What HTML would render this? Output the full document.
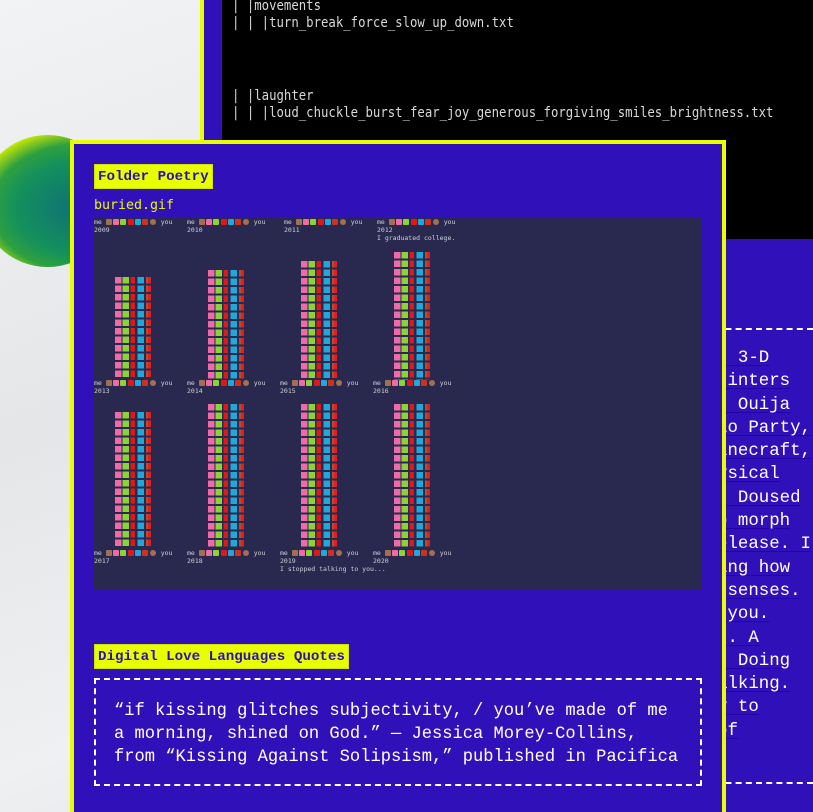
<!DOCTYPE html>
<html><head><meta charset="utf-8"><style>
*{margin:0;padding:0;box-sizing:border-box}
html,body{width:813px;height:812px;overflow:hidden}
body{position:relative;background:linear-gradient(160deg,#f2f3f4 0%,#e4e6e8 40%,#eef0f1 70%,#dcdfe2 100%);font-family:"Liberation Mono",monospace}
.abs{position:absolute}
#ball{left:-20px;top:135px;width:135px;height:132px;border-radius:50%;background:radial-gradient(ellipse at 75% 55%,#0f6f78 0%,#14905c 45%,#2ea040 62%,#d8f000 80%,#dff500 100%)}
#back{left:200px;top:0;width:613px;height:812px;background:#3010b8;border-left:4px solid #e8ff00}
#term{left:222px;top:0;width:591px;height:239px;background:#000;color:#d8d8d8;font-family:"DejaVu Sans Mono","Liberation Mono",monospace;font-size:14px;line-height:17px}
#term div{position:absolute;left:10px;white-space:pre;transform:scaleX(.88);transform-origin:left}
#rt{left:706.6px;top:347px;font-size:17.4px;line-height:23.3px;color:#fff;white-space:pre}
#rt div{text-decoration:underline;text-decoration-color:#2500a8;text-underline-offset:3px}
.dash{height:0;border-top:2px dashed #fff}
#front{left:70px;top:140px;width:656px;height:700px;background:#3010b8;border:4px solid #e8ff00}
.hd{position:absolute;background:#e8ff00;color:#2c10b0;font-weight:bold;font-size:14.2px;height:25px;line-height:25px;padding:0 3px;border:1px solid #d0e000}
#gif{left:94px;top:217px;width:607px;height:372px;background:#29294f;overflow:hidden}
.lab{position:absolute;font-family:"DejaVu Sans Mono",monospace;font-size:6.5px;color:#d0d0d8;line-height:8px;white-space:pre}
.em{display:inline-block;width:6px;height:6px;border-radius:1px;margin-right:1.3px;vertical-align:-1px}
.tw{position:absolute;width:37px;background:
 repeating-linear-gradient(180deg,transparent 0 6.5px,#29294f 6.5px 8.5px),
 linear-gradient(90deg,#f06aa8 0 6.5px,transparent 6.5px 7.5px,#8ad43a 7.5px 14px,transparent 14px 15.5px,#e01818 15.5px 20px,transparent 20px 22.5px,#1fa8d8 22.5px 29px,transparent 29px 31px,#b05030 31px 33px,#e02020 33px 36px,transparent 36px)}
#quote{left:94px;top:678px;width:608px;height:108px;border:2px dashed #fff;color:#fff;font-size:17.1px;line-height:23px;padding:20px 0 0 18px;white-space:pre}
</style></head><body>
<div id="ball" class="abs"></div>
<div id="back" class="abs"></div>
<div id="term" class="abs">
<div style="top:-2px">| |movements</div>
<div style="top:15px">| | |turn_break_force_slow_up_down.txt</div>
<div style="top:88px">| |laughter</div>
<div style="top:105px">| | |loud_chuckle_burst_fear_joy_generous_forgiving_smiles_brightness.txt</div>
<div style="top:196px">                                                             .txt</div>
</div>
<div class="abs dash" style="left:705px;top:328px;width:108px"></div>
<div class="abs dash" style="left:705px;top:782px;width:108px"></div>
<div id="rt" class="abs"><div>ed 3-D</div><div>printers</div><div>in Ouija</div><div>dio Party,</div><div>Minecraft,</div><div>hysical</div><div>s. Doused</div><div>to morph</div><div>release. I</div><div>ding how</div><div>r senses.</div><div>o you.</div><div>on. A</div><div>t. Doing</div><div>talking.</div><div>ly to</div><div> of</div></div>
<div id="front" class="abs"></div>
<div class="hd" style="left:94px;top:164px">Folder Poetry</div>
<div class="abs" style="left:94px;top:198px;color:#e8ff00;font-size:13.3px;font-family:'DejaVu Sans Mono',monospace">buried.gif</div>
<div id="gif" class="abs">
<div class="lab" style="left:0;top:1px">me <i class="em" style="background:#a07050"></i><i class="em" style="background:#f06aa8"></i><i class="em" style="background:#8ad43a"></i><i class="em" style="background:#e01818"></i><i class="em" style="background:#1fa8d8"></i><i class="em" style="background:#d03020"></i><i class="em" style="background:#a07050;border-radius:50%"></i> you<br>2009</div>
<div class="lab" style="left:93px;top:1px">me <i class="em" style="background:#a07050"></i><i class="em" style="background:#f06aa8"></i><i class="em" style="background:#8ad43a"></i><i class="em" style="background:#e01818"></i><i class="em" style="background:#1fa8d8"></i><i class="em" style="background:#d03020"></i><i class="em" style="background:#a07050;border-radius:50%"></i> you<br>2010</div>
<div class="lab" style="left:190px;top:1px">me <i class="em" style="background:#a07050"></i><i class="em" style="background:#f06aa8"></i><i class="em" style="background:#8ad43a"></i><i class="em" style="background:#e01818"></i><i class="em" style="background:#1fa8d8"></i><i class="em" style="background:#d03020"></i><i class="em" style="background:#a07050;border-radius:50%"></i> you<br>2011</div>
<div class="lab" style="left:283px;top:1px">me <i class="em" style="background:#a07050"></i><i class="em" style="background:#f06aa8"></i><i class="em" style="background:#8ad43a"></i><i class="em" style="background:#e01818"></i><i class="em" style="background:#1fa8d8"></i><i class="em" style="background:#d03020"></i><i class="em" style="background:#a07050;border-radius:50%"></i> you<br>2012<br>I graduated college.</div>
<div class="lab" style="left:0;top:162px">me <i class="em" style="background:#a07050"></i><i class="em" style="background:#f06aa8"></i><i class="em" style="background:#8ad43a"></i><i class="em" style="background:#e01818"></i><i class="em" style="background:#1fa8d8"></i><i class="em" style="background:#d03020"></i><i class="em" style="background:#a07050;border-radius:50%"></i> you<br>2013</div>
<div class="lab" style="left:93px;top:162px">me <i class="em" style="background:#a07050"></i><i class="em" style="background:#f06aa8"></i><i class="em" style="background:#8ad43a"></i><i class="em" style="background:#e01818"></i><i class="em" style="background:#1fa8d8"></i><i class="em" style="background:#d03020"></i><i class="em" style="background:#a07050;border-radius:50%"></i> you<br>2014</div>
<div class="lab" style="left:186px;top:162px">me <i class="em" style="background:#a07050"></i><i class="em" style="background:#f06aa8"></i><i class="em" style="background:#8ad43a"></i><i class="em" style="background:#e01818"></i><i class="em" style="background:#1fa8d8"></i><i class="em" style="background:#d03020"></i><i class="em" style="background:#a07050;border-radius:50%"></i> you<br>2015</div>
<div class="lab" style="left:279px;top:162px">me <i class="em" style="background:#a07050"></i><i class="em" style="background:#f06aa8"></i><i class="em" style="background:#8ad43a"></i><i class="em" style="background:#e01818"></i><i class="em" style="background:#1fa8d8"></i><i class="em" style="background:#d03020"></i><i class="em" style="background:#a07050;border-radius:50%"></i> you<br>2016</div>
<div class="lab" style="left:0;top:332px">me <i class="em" style="background:#a07050"></i><i class="em" style="background:#f06aa8"></i><i class="em" style="background:#8ad43a"></i><i class="em" style="background:#e01818"></i><i class="em" style="background:#1fa8d8"></i><i class="em" style="background:#d03020"></i><i class="em" style="background:#a07050;border-radius:50%"></i> you<br>2017</div>
<div class="lab" style="left:93px;top:332px">me <i class="em" style="background:#a07050"></i><i class="em" style="background:#f06aa8"></i><i class="em" style="background:#8ad43a"></i><i class="em" style="background:#e01818"></i><i class="em" style="background:#1fa8d8"></i><i class="em" style="background:#d03020"></i><i class="em" style="background:#a07050;border-radius:50%"></i> you<br>2018</div>
<div class="lab" style="left:186px;top:332px">me <i class="em" style="background:#a07050"></i><i class="em" style="background:#f06aa8"></i><i class="em" style="background:#8ad43a"></i><i class="em" style="background:#e01818"></i><i class="em" style="background:#1fa8d8"></i><i class="em" style="background:#d03020"></i><i class="em" style="background:#a07050;border-radius:50%"></i> you<br>2019<br>I stopped talking to you...</div>
<div class="lab" style="left:279px;top:332px">me <i class="em" style="background:#a07050"></i><i class="em" style="background:#f06aa8"></i><i class="em" style="background:#8ad43a"></i><i class="em" style="background:#e01818"></i><i class="em" style="background:#1fa8d8"></i><i class="em" style="background:#d03020"></i><i class="em" style="background:#a07050;border-radius:50%"></i> you<br>2020</div>
<div class="tw" style="left:21px;top:60px;height:102px"></div>
<div class="tw" style="left:114px;top:53px;height:110px"></div>
<div class="tw" style="left:207px;top:44px;height:119px"></div>
<div class="tw" style="left:300px;top:35px;height:128px"></div>
<div class="tw" style="left:21px;top:195px;height:136px"></div>
<div class="tw" style="left:114px;top:187px;height:144px"></div>
<div class="tw" style="left:207px;top:187px;height:144px"></div>
<div class="tw" style="left:300px;top:187px;height:144px"></div>
</div>
<div class="hd" style="left:94px;top:644px">Digital Love Languages Quotes</div>
<div id="quote" class="abs">“if kissing glitches subjectivity, / you’ve made of me
a morning, shined on God.” — Jessica Morey-Collins,
from “Kissing Against Solipsism,” published in Pacifica</div>
</body></html>
